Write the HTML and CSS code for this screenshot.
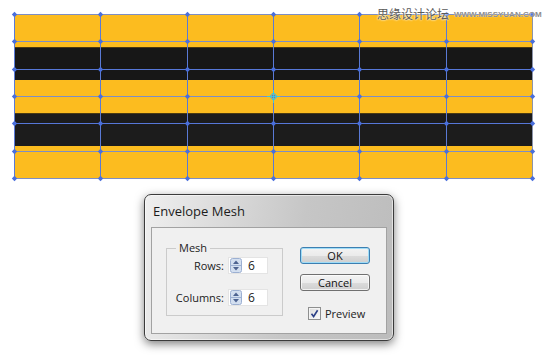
FILE: index.html
```html
<!DOCTYPE html>
<html lang="en">
<head>
    <meta charset="UTF-8">
    <title>Envelope Mesh</title>
    <link rel="stylesheet" href="styles.css">
</head>
<body>
    <div class="artboard">
        <svg class="mesh" width="550" height="190" viewBox="0 0 550 190">
            <defs>
                <marker id="node" markerUnits="userSpaceOnUse" markerWidth="7" markerHeight="7" refX="3.5" refY="3.5">
                    <path d="M3.5 0.8 L6.2 3.5 L3.5 6.2 L0.8 3.5 Z" fill="#4a6fdc"/>
                </marker>
            </defs>
            <!-- stripes -->
            <rect x="14" y="14" width="519" height="165" fill="#fcbc1f"/>
            <rect x="14" y="47" width="519" height="33" fill="#171717"/>
            <rect x="14" y="113" width="519" height="33" fill="#1c1c1c"/>
            <line x1="14" y1="47.5" x2="533" y2="47.5" stroke="#4a3a12" stroke-width="1"/>
            <line x1="14" y1="113.5" x2="533" y2="113.5" stroke="#4a3a12" stroke-width="1"/>

            <!-- mesh rows -->
            <g fill="none" stroke="#7d8ec4" stroke-width="1">
                <polyline points="14.5,14.5 533,14.5"/>
                <polyline points="14.5,41.5 533,41.5"/>
                <polyline points="14.5,69.5 533,69.5" stroke="#5677d8"/>
                <polyline points="14.5,96.5 533,96.5"/>
                <polyline points="14.5,123.5 533,123.5" stroke="#5677d8"/>
                <polyline points="14.5,151.5 533,151.5"/>
                <polyline points="14.5,178.5 533,178.5"/>
            </g>
            <!-- mesh columns, nodes on every vertex -->
            <g fill="none" stroke="#5a7ad6" stroke-width="1" marker-start="url(#node)" marker-mid="url(#node)" marker-end="url(#node)">
                <polyline points="14.5,14.5 14.5,41.5 14.5,69.5 14.5,96.5 14.5,123.5 14.5,151.5 14.5,178.5"/>
                <polyline points="100.5,14.5 100.5,41.5 100.5,69.5 100.5,96.5 100.5,123.5 100.5,151.5 100.5,178.5"/>
                <polyline points="187.5,14.5 187.5,41.5 187.5,69.5 187.5,96.5 187.5,123.5 187.5,151.5 187.5,178.5"/>
                <polyline points="273.5,14.5 273.5,41.5 273.5,69.5 273.5,96.5 273.5,123.5 273.5,151.5 273.5,178.5"/>
                <polyline points="359.5,14.5 359.5,41.5 359.5,69.5 359.5,96.5 359.5,123.5 359.5,151.5 359.5,178.5"/>
                <polyline points="446.5,14.5 446.5,41.5 446.5,69.5 446.5,96.5 446.5,123.5 446.5,151.5 446.5,178.5"/>
                <polyline points="532.5,14.5 532.5,41.5 532.5,69.5 532.5,96.5 532.5,123.5 532.5,151.5 532.5,178.5" stroke="#8c94aa"/>
            </g>
            <!-- centre point -->
            <g stroke="#3fc6dc" stroke-width="1" fill="none">
                <path d="M273.5 92.5 L277.5 96.5 L273.5 100.5 L269.5 96.5 Z"/>
                <path d="M267 96.5 H280 M273.5 90 V103"/>
            </g>
        </svg>
        <div class="watermark">
            <span class="cn">思缘设计论坛</span>
            <span class="url">WWW.MISSYUAN.COM</span>
        </div>
    </div>

    <div class="dialog">
        <div class="titlebar">Envelope Mesh</div>
        <div class="panel">
            <div class="group">
                <span class="legend">Mesh</span>
                <div class="field">
                    <label for="rows">Rows:</label>
                    <div class="spin">
                        <svg class="arrows" width="12" height="15" viewBox="0 0 12 15">
                            <rect x="0.5" y="0.5" width="11" height="14" rx="2" fill="#d3dff0" stroke="#9cb0d2"/>
                            <line x1="1" y1="7.5" x2="11" y2="7.5" stroke="#9cb0d2"/>
                            <path d="M6 2.5 L9 6 H3 Z" fill="#4d6390"/>
                            <path d="M6 12.5 L9 9 H3 Z" fill="#4d6390"/>
                        </svg>
                        <span class="value" id="rows">6</span>
                    </div>
                </div>
                <div class="field">
                    <label for="columns">Columns:</label>
                    <div class="spin">
                        <svg class="arrows" width="12" height="15" viewBox="0 0 12 15">
                            <rect x="0.5" y="0.5" width="11" height="14" rx="2" fill="#d3dff0" stroke="#9cb0d2"/>
                            <line x1="1" y1="7.5" x2="11" y2="7.5" stroke="#9cb0d2"/>
                            <path d="M6 2.5 L9 6 H3 Z" fill="#4d6390"/>
                            <path d="M6 12.5 L9 9 H3 Z" fill="#4d6390"/>
                        </svg>
                        <span class="value" id="columns">6</span>
                    </div>
                </div>
            </div>
            <div class="actions">
                <button class="btn btn-default">OK</button>
                <button class="btn">Cancel</button>
                <label class="check">
                    <span class="box">
                        <svg width="9" height="9" viewBox="0 0 9 9"><path d="M1.5 4.8 L3.6 7.5 L7.6 1.2" fill="none" stroke="#2b3f86" stroke-width="1.6"/></svg>
                    </span>
                    Preview
                </label>
            </div>
        </div>
    </div>
</body>
</html>
```

FILE: styles.css
```css
body {
    margin: 0;
    width: 550px;
    height: 357px;
    overflow: hidden;
    background: #fff;
    font-family: "Open Sans", "Noto Sans", sans-serif;
    color: #222;
}
.artboard {
    position: relative;
    height: 190px;
}
.mesh {
    display: block;
}
.watermark {
    position: absolute;
    top: 6px;
    left: 377px;
    display: flex;
    align-items: center;
    gap: 5px;
    white-space: nowrap;
}
.watermark .cn {
    font-family: "Noto Sans CJK SC", sans-serif;
    font-size: 12px;
    line-height: 16px;
    color: #5a5a5a;
    text-shadow: 0 0 2px #fff, 0 0 2px #fff;
}
.watermark .url {
    font-family: "Liberation Sans", Arial, sans-serif;
    font-size: 8px;
    font-weight: bold;
    color: #8c8c8c;
    text-shadow: 0 0 1px #fff;
}
.dialog {
    width: 250px;
    height: 147px;
    box-sizing: border-box;
    margin: 4px 0 0 144px;
    padding: 0 6px 6px;
    border: 1px solid #3b3b3b;
    border-radius: 7px;
    background: linear-gradient(100deg, #efefef 0%, #dadada 30%, #c6c6c6 60%, #bcbcbc 100%);
    box-shadow: inset 0 0 0 1px rgba(255, 255, 255, 0.55), 0 3px 10px rgba(0, 0, 0, 0.5);
    display: flex;
    flex-direction: column;
}
.titlebar {
    height: 32px;
    flex: none;
    display: flex;
    align-items: center;
    padding-left: 2px;
    font-size: 13px;
    color: #1c1c1c;
}
.panel {
    flex: 1;
    display: flex;
    align-items: flex-start;
    gap: 17px;
    padding: 0 16px 0 14px;
    background: #f0f0f0;
    border: 1px solid #a2a2a2;
}
.group {
    position: relative;
    width: 117px;
    box-sizing: border-box;
    margin-top: 20px;
    padding: 8px 0 9px;
    border: 1px solid #cbcbcb;
    display: flex;
    flex-direction: column;
    gap: 15px;
}
.legend {
    position: absolute;
    top: -8px;
    left: 9px;
    padding: 0 3px;
    background: #f0f0f0;
    font-size: 11px;
    line-height: 14px;
}
.field {
    display: flex;
    align-items: center;
    height: 17px;
}
.field label {
    width: 57px;
    margin-right: 4px;
    text-align: right;
    font-size: 11px;
}
.spin {
    width: 40px;
    height: 17px;
    box-sizing: border-box;
    display: flex;
    align-items: center;
    padding-left: 1px;
    background: #fff;
    border: 1px solid #e4e4e4;
}
.arrows {
    display: block;
}
.value {
    margin-left: 6px;
    font-size: 12px;
}
.actions {
    width: 70px;
    margin-top: 19px;
    display: flex;
    flex-direction: column;
}
.btn {
    width: 70px;
    height: 17px;
    padding: 0;
    border: 1px solid #707070;
    border-radius: 3px;
    background: linear-gradient(#f3f3f3 0%, #ebebeb 50%, #dcdcdc 51%, #cfcfcf 100%);
    box-shadow: inset 0 0 0 1px rgba(255, 255, 255, 0.7);
    font-family: inherit;
    font-size: 11px;
    line-height: 14px;
    color: #111;
}
.btn + .btn {
    margin-top: 10px;
}
.btn-default {
    border-color: #3c7fb1;
    box-shadow: inset 0 0 0 1px #9fdcf7;
}
.check {
    margin: 16px 0 0 8px;
    display: flex;
    align-items: center;
    gap: 4px;
    font-size: 11px;
    line-height: 13px;
}
.check .box {
    width: 13px;
    height: 13px;
    box-sizing: border-box;
    display: flex;
    align-items: center;
    justify-content: center;
    border: 1px solid #8e8f8f;
    background: linear-gradient(135deg, #dcdcdc, #fbfbfb);
    box-shadow: inset 0 0 0 1px #f4f4f4;
}
```
